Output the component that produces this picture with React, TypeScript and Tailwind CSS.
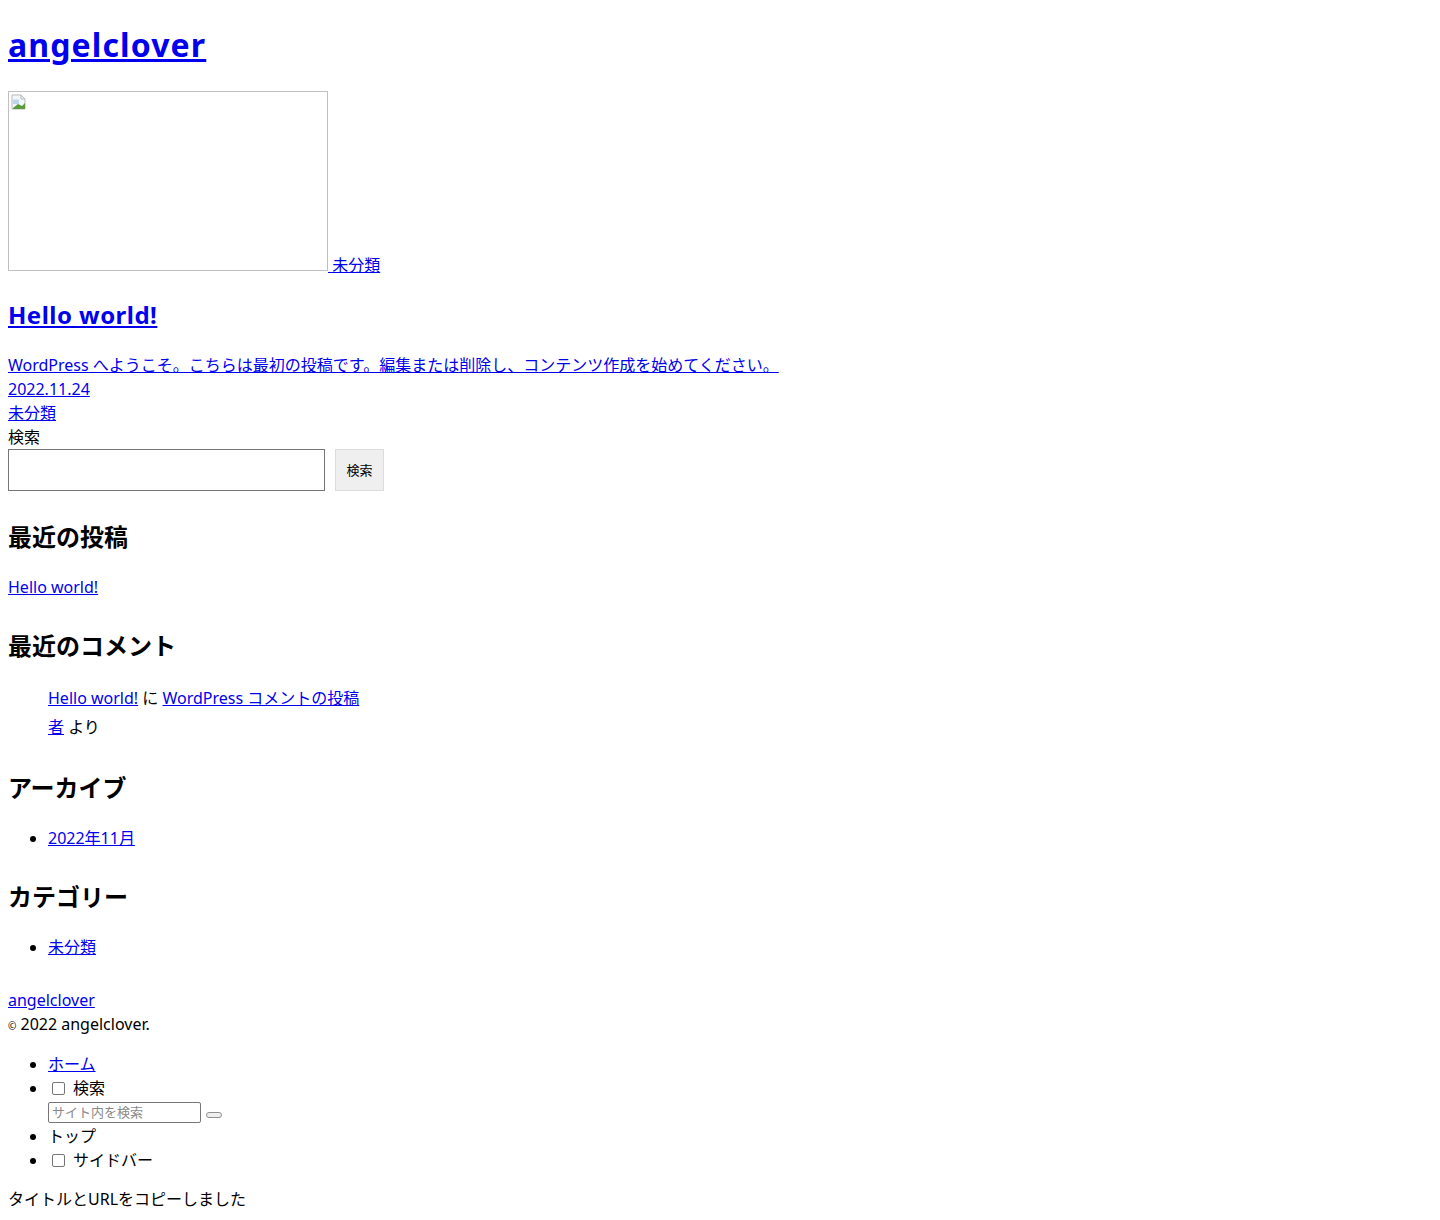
import React from "react";

const font = {
  fontFamily: '"Noto Sans", "Noto Sans CJK JP", sans-serif',
};

function BrokenImg() {
  return (
    <span className="inline-block align-baseline w-[320px] h-[180px] border border-[#c0c0c0] relative">
      <svg className="absolute left-[2px] top-[2px]" width="16" height="16" viewBox="0 0 16 16">
        <path d="M1 1h9l4 4v10H1z" fill="#f4f6f8" stroke="#b5b9be" strokeWidth="1" />
        <path d="M10 1v4h4" fill="none" stroke="#b5b9be" strokeWidth="1" />
        <path d="M2 6c2-1 4-1 6 0v4H2z" fill="#bcd6ee" />
        <path d="M2 14l5-4 4 2 3-3v6H2z" fill="#5a9a3a" />
      </svg>
    </span>
  );
}

export default function App() {
  const link = "text-[#0000ee] underline";
  return (
    <div className="bg-white text-black min-h-[1220px] px-[8px] text-[16px]" style={font}>
      <h1 className="pt-[21px] text-[32px] font-bold leading-[48px] tracking-[0.035em]">
        <a className={link} href="#">angelclover</a>
      </h1>
      <div className="mt-[22px] h-[186px] leading-[24px]">
        <a href="#"><BrokenImg /></a>
        <a className={link} href="#"> 未分類</a>
      </div>
      <h2 className="mt-[20px] text-[24px] font-bold leading-[36px] tracking-[0.02em]">
        <a className={link} href="#">Hello world!</a>
      </h2>
      <div className="mt-[20px] leading-[24px]">
        <div><a className={link} href="#">WordPress へようこそ。こちらは最初の投稿です。編集または削除し、コンテンツ作成を始めてください。 </a></div>
        <div><a className={link} href="#">2022.11.24</a></div>
        <div><a className={link} href="#">未分類</a></div>
        <div>検索</div>
      </div>
      <div className="flex gap-[10px] h-[42px]">
        <input className="w-[317px] h-[42px] border border-[#767676] bg-white" type="text" />
        <button className="w-[49px] h-[42px] bg-[#efefef] border border-[#dcdcdc] text-[13px] leading-none">検索</button>
      </div>

      <h2 className="mt-[28px] text-[24px] font-bold leading-[36px]">最近の投稿</h2>
      <div className="mt-[20px] leading-[24px]">
        <a className={link} href="#">Hello world!</a>
      </div>

      <h2 className="mt-[29px] text-[24px] font-bold leading-[36px]">最近のコメント</h2>
      <div className="mt-[20px] pl-[40px] leading-[29px]">
        <div className="h-[29px]">
          <a className={link} href="#">Hello world!</a> に <a className={link} href="#">WordPress コメントの投稿</a>
        </div>
        <div className="h-[29px]">
          <a className={link} href="#">者</a> より
        </div>
      </div>

      <h2 className="mt-[28px] text-[24px] font-bold leading-[36px]">アーカイブ</h2>
      <ul className="mt-[20px] pl-[40px] list-disc leading-[24px]">
        <li><a className={link} href="#">2022年11月</a></li>
      </ul>

      <h2 className="mt-[29px] text-[24px] font-bold leading-[36px]">カテゴリー</h2>
      <ul className="mt-[20px] pl-[40px] list-disc leading-[24px]">
        <li><a className={link} href="#">未分類</a></li>
      </ul>

      <div className="mt-[29px] leading-[24px]">
        <div className="h-[24px]"><a className={link} href="#">angelclover</a></div>
        <div className="h-[24px]"><span className="text-[10px] leading-none align-middle">©</span> 2022 angelclover.</div>
      </div>

      <ul className="mt-[16px] pl-[40px] list-disc leading-[24px]">
        <li className="h-[24px]"><a className={link} href="#">ホーム</a></li>
        <li className="h-[24px]">
          <input type="checkbox" className="w-[13px] h-[13px] ml-[4px] mr-[8px] appearance-none border border-[#767676] rounded-[2px] bg-white align-[-1px]" />
          検索
        </li>
        <li className="list-none h-[24px] flex items-center">
          <input
            className="w-[153px] h-[21px] border border-[#767676] rounded-[2px] text-[13px] leading-none px-[3px] placeholder-[#8a8a8a]"
            placeholder="サイト内を検索"
          />
          <button className="ml-[5px] mt-[6px] w-[16px] h-[6px] bg-[#efefef] border border-[#8f8f8f] rounded-[3px]" />
        </li>
        <li className="h-[24px]">トップ</li>
        <li className="h-[24px]">
          <input type="checkbox" className="w-[13px] h-[13px] ml-[4px] mr-[8px] appearance-none border border-[#767676] rounded-[2px] bg-white align-[-1px]" />
          サイドバー
        </li>
      </ul>

      <div className="mt-[15px] leading-[24px]">タイトルとURLをコピーしました</div>
    </div>
  );
}
